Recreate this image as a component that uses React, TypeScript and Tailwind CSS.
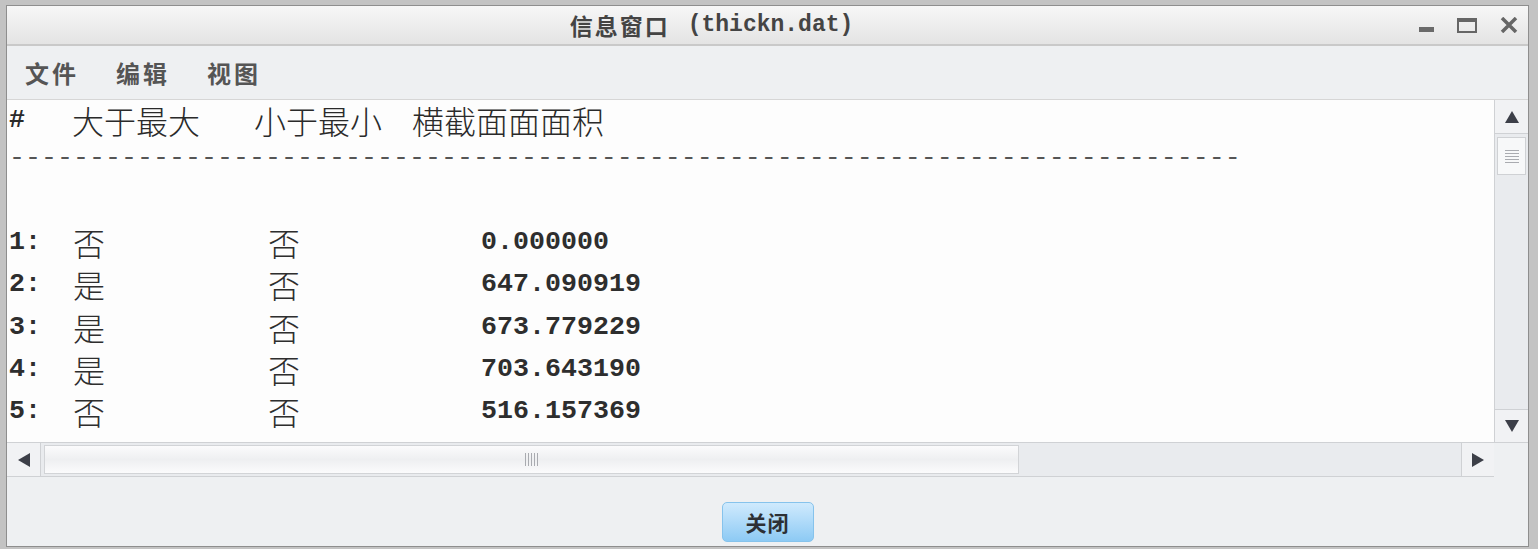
import React from 'react';

const cjk = "font-['Noto_Sans_CJK_SC',sans-serif]";
const mono = "font-['Liberation_Mono','Noto_Sans_CJK_SC',monospace]";

const rows = [
  { n: '1:', a: '否', b: '否', v: '0.000000' },
  { n: '2:', a: '是', b: '否', v: '647.090919' },
  { n: '3:', a: '是', b: '否', v: '673.779229' },
  { n: '4:', a: '是', b: '否', v: '703.643190' },
  { n: '5:', a: '否', b: '否', v: '516.157369' },
];

const Tri = ({ dir }: { dir: 'up' | 'down' | 'left' | 'right' }) => {
  const pts = {
    up: '0,12 7,0 14,12',
    down: '0,0 14,0 7,12',
    left: '12,0 12,14 0,7',
    right: '0,0 0,14 12,7',
  }[dir];
  const vertical = dir === 'up' || dir === 'down';
  return (
    <svg width={vertical ? 14 : 12} height={vertical ? 12 : 14} viewBox={vertical ? '0 0 14 12' : '0 0 12 14'}>
      <polygon points={pts} fill="#3c3f48" />
    </svg>
  );
};

export default function App() {
  return (
    <div className="w-[1538px] h-[557px] bg-white overflow-hidden">
      <div className="h-[549px] bg-[#c3c3c3] pt-[5px] pl-[6px] pr-[9px] pb-[2px] flex">
        <div className="flex-1 flex flex-col border border-[#8e8e8e] bg-[#eef0f2]">
          {/* title bar */}
          <div className="h-[40px] flex items-center bg-gradient-to-b from-[#f7f7f7] to-[#e4e4e4] border-b-2 border-[#c9c9c9]">
            <div className="flex-1 flex justify-center items-center text-[#444] pl-[6px]">
              <span className={`${cjk} font-bold text-[23px] tracking-[2px] leading-[30px]`}>信息窗口</span>
              <span className={`${mono} font-bold text-[23px] leading-[30px] ml-[18px]`}>(thickn.dat)</span>
            </div>
            <div className="w-[118px] flex items-center pl-[9px] gap-[23px]">
              <div className="w-[15px] h-[5px] bg-[#6a6a6a] mt-[8px]" />
              <div className="w-[20px] h-[15px] border-2 border-t-[4px] border-[#666]" />
              <svg width="18" height="16" viewBox="0 0 18 16">
                <path d="M2 1 L16 15 M16 1 L2 15" stroke="#666" strokeWidth="3.5" />
              </svg>
            </div>
          </div>

          {/* menu bar */}
          <div className="h-[54px] flex items-center pl-[18px] gap-[37px] bg-[#eef0f2] border-b border-[#d6d6d6]">
            {['文件', '编辑', '视图'].map((m) => (
              <span key={m} className={`${cjk} font-bold text-[24px] tracking-[3px] text-[#555] leading-[30px]`}>
                {m}
              </span>
            ))}
          </div>

          {/* text area + vertical scrollbar */}
          <div className="h-[342px] flex">
            <div className="flex-1 bg-[#fdfdfd] pl-[2px]">
              <div className="h-[40px] flex items-center text-[#2a2a2a]">
                <span className={`${mono} font-bold text-[26.67px] w-[63px] leading-[40px]`}>#</span>
                <span className={`${cjk} font-light text-[32px] leading-[40px] w-[182px]`}>大于最大</span>
                <span className={`${cjk} font-light text-[32px] leading-[40px] w-[158px]`}>小于最小</span>
                <span className={`${cjk} font-light text-[32px] leading-[40px]`}>横截面面面积</span>
              </div>
              <div className={`h-[36px] flex items-center ${mono} text-[26.67px] text-[#555] leading-[36px] whitespace-pre`}>
                {'-'.repeat(77)}
              </div>
              <div className="h-[45px]" />
              {rows.map((r) => (
                <div key={r.n} className="h-[42.25px] flex items-center text-[#2e2e2e]">
                  <span className={`${mono} font-bold text-[26.67px] w-[64px] leading-[40px]`}>{r.n}</span>
                  <span className={`${cjk} font-light text-[32px] w-[195px] leading-[40px]`}>{r.a}</span>
                  <span className={`${cjk} font-light text-[32px] w-[213px] leading-[40px]`}>{r.b}</span>
                  <span className={`${mono} font-bold text-[26.67px] leading-[40px]`}>{r.v}</span>
                </div>
              ))}
            </div>
            <div className="w-[34px] bg-[#e9ebee] border-l border-[#cfd1d4] flex flex-col">
              <div className="h-[34px] flex items-center justify-center bg-[#f1f2f4] border-b border-[#cfd1d4]">
                <Tri dir="up" />
              </div>
              <div className="mt-[3px] mx-[2px] h-[38px] bg-[#f7f8f9] border border-[#cfd1d4] flex flex-col items-center justify-center gap-[2px]">
                {[0, 1, 2, 3, 4].map((i) => (
                  <div key={i} className="w-[14px] h-px bg-[#a9abb0]" />
                ))}
              </div>
              <div className="flex-1" />
              <div className="h-[33px] flex items-center justify-center bg-[#f1f2f4] border-t border-[#cfd1d4]">
                <Tri dir="down" />
              </div>
            </div>
          </div>

          {/* horizontal scrollbar */}
          <div className="h-[35px] flex border-t border-[#cfd1d4]">
            <div className="flex-1 flex bg-[#e9ebee] border-b border-[#cfd1d4]">
              <div className="w-[34px] flex items-center justify-center bg-[#f1f2f4] border-r border-[#cfd1d4]">
                <Tri dir="left" />
              </div>
              <div className="w-[975px] my-[2px] ml-[3px] bg-gradient-to-b from-[#fbfbfc] via-[#eeeff1] to-[#fbfbfc] border border-[#d2d4d7] flex items-center justify-center">
                <div className="flex gap-[2px]">
                  {[0, 1, 2, 3, 4].map((i) => (
                    <div key={i} className="w-px h-[13px] bg-[#a9abb0]" />
                  ))}
                </div>
              </div>
              <div className="flex-1" />
              <div className="w-[33px] flex items-center justify-center bg-[#f1f2f4] border-l border-[#cfd1d4]">
                <Tri dir="right" />
              </div>
            </div>
            <div className="w-[34px] bg-[#eef0f2]" />
          </div>

          {/* bottom button area */}
          <div className="flex-1 flex items-start justify-center pt-[25px] bg-[#eef0f2]">
            <button className="w-[92px] h-[40px] rounded-[5px] border border-[#86c3ec] bg-gradient-to-b from-[#cfeafd] to-[#8dcaf4] flex items-center justify-center">
              <span className={`${cjk} font-bold text-[21px] text-[#2d3035] leading-[28px] tracking-[1px]`}>关闭</span>
            </button>
          </div>
        </div>
      </div>
    </div>
  );
}
